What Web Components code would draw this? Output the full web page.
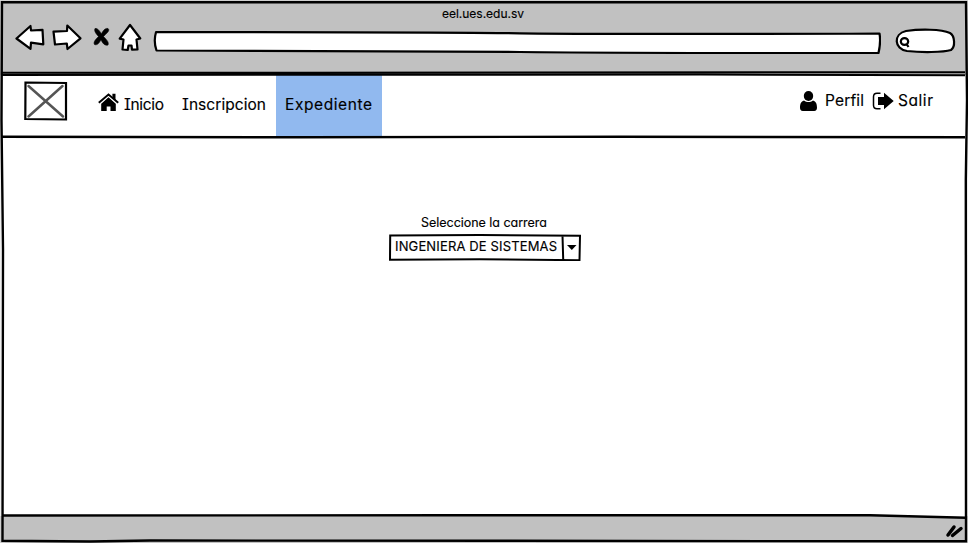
<!DOCTYPE html>
<html lang="es">
<head>
<meta charset="utf-8">
<title>eel.ues.edu.sv</title>
<style>
html,body{margin:0;width:968px;height:543px;overflow:hidden;background:#fff}
body{font-family:Inter,"Open Sans",sans-serif;color:#000}
</style>
</head>
<body>
<sketch-browser>
  <browser-bar slot="bar"><sketch-text size="12" width="82">eel.ues.edu.sv</sketch-text></browser-bar>
  <site-nav slot="nav">
    <image-mark slot="logo"></image-mark>
    <nav-item style="width:84px;--icon-w:21px;--gap:5px" icon="home"><sketch-text size="15.5" width="40" serif>Inicio</sketch-text></nav-item>
    <nav-item style="width:94px"><sketch-text size="15.5" width="84" serif>Inscripcion</sketch-text></nav-item>
    <nav-item style="width:97px;--pad:9px;--bg:#91b9ef"><sketch-text size="15.5" width="87">Expediente</sketch-text></nav-item>
    <nav-item slot="end" style="--icon-w:17px;--gap:8px;width:72px" icon="user"><sketch-text size="15.5" width="39">Perfil</sketch-text></nav-item>
    <nav-item slot="end" style="--icon-w:22px;--gap:4px;width:61px" icon="exit"><sketch-text size="15.5" width="35">Salir</sketch-text></nav-item>
  </site-nav>
  <career-field>
    <sketch-text slot="label" size="12.5" width="126">Seleccione la carrera</sketch-text>
    <sketch-text size="13" width="162">INGENIERA DE SISTEMAS</sketch-text>
  </career-field>
</sketch-browser>
<script>
const define = (name, html, setup) => {
  const t = document.createElement('template');
  t.innerHTML = html;
  customElements.define(name, class extends HTMLElement {
    constructor() { super(); this.attachShadow({mode:'open'}).append(t.content.cloneNode(true)); }
    connectedCallback() { if (setup) setup(this); }
  });
};

// Text whose tracking is adjusted so that it fills the given width.
define('sketch-text', `<style>
:host{display:block;white-space:nowrap;line-height:1.2;flex:none}
span{display:inline-block;font-feature-settings:"cv11","ss03";-webkit-text-stroke:.15px #000}
:host([serif]) span{font-feature-settings:"cv11","cv08"}
</style><span><slot></slot></span>`, el => {
  const s = el.shadowRoot.querySelector('span'), w = +el.getAttribute('width');
  s.style.fontSize = el.getAttribute('size') + 'px';
  el.style.width = w + 'px';
  s.style.letterSpacing = (w - s.getBoundingClientRect().width) / (el.textContent.length - 1) + 'px';
});

const icons = {
  home:`<svg width="21" height="20" viewBox="0 0 21 20"><path d="M3.2 10.800 10.500 4.300l7.300 6.500V18h-5.300v-4.500H8.700V18H3.200z"/><path d="M.8 11 10.500 2.600l9.700 8.400" fill="none" stroke="#fff" stroke-width="1.800"/><path d="M.8 9.700 10.500 1.500l9.700 8.200" fill="none" stroke="#000" stroke-width="2"/><path d="M14.400 .8h3.100v6.500l-3.100-2.500z"/></svg>`,
  user:`<svg width="17" height="20" viewBox="0 0 17 20"><ellipse cx="8.500" cy="5" rx="4.700" ry="5"/><path d="M4 9.400c2.700 2.200 6.300 2.200 9 0 3 .8 4 3.800 4 7.100 0 2-.9 3.500-2.800 3.500H2.800C.9 20 0 18.500 0 16.500 0 13.200 1 10.200 4 9.400z"/></svg>`,
  exit:`<svg width="22" height="20" viewBox="0 0 22 20"><path d="M8.500 2.200H5Q1.500 2.200 1.500 5.700v8.600q0 3.500 3.500 3.500h3.500" fill="none" stroke="#000" stroke-width="1.500"/><path d="M6 6h6V1.700l9.700 8.300-9.700 8.300V14H6z"/></svg>`
};
define('nav-item', `<style>
:host{display:flex;box-sizing:content-box;align-items:center;height:62px;padding-left:var(--pad,0);background:var(--bg,none);gap:var(--gap,0)}
i{display:flex;width:var(--icon-w,0);margin-top:-2px}
:host([icon=home]) i{margin-top:-5px}
::slotted(*){margin-top:-2px}
</style><i></i><slot></slot>`, el => {
  el.shadowRoot.querySelector('i').innerHTML = icons[el.getAttribute('icon')] || '';
});

define('image-mark', `<style>:host{display:block;width:44px;height:40px}svg{display:block}</style>
<svg width="44" height="40" viewBox="0 0 44 40" fill="none"><path d="M1.500 1.500 42 2v36.500L1.300 38z" stroke="#000" stroke-width="2.200"/><path d="M4.500 5 39 35.500M38.500 5 4.500 35.500" stroke="#555" stroke-width="2.500" stroke-linecap="round"/></svg>`);

define('site-nav', `<style>
:host{display:flex;justify-content:space-between;height:61px;padding:0 35px 0 24px;box-sizing:border-box}
.l,.r{display:flex}.l{align-items:center}
.menu{display:flex;margin-left:30px}
slot[name=logo]::slotted(*){margin-bottom:10px}
.r{margin-top:-5px}
.r ::slotted(*){padding-top:1px}
</style><div class="l"><slot name="logo"></slot><div class="menu"><slot></slot></div></div><div class="r"><slot name="end"></slot></div>`);

define('browser-bar', `<style>
:host{display:flex;flex-direction:column;align-items:center;height:75px;background:#c1c1c1}
.title{padding:4px 2px 0 0;height:18px;line-height:0}
.title ::slotted(*){margin-top:-1px}
.tools{display:flex;align-items:center;align-self:stretch;padding:1px 12px 0 15px;height:36px}
svg{display:block;flex:none}
path,ellipse{stroke:#000;stroke-width:2.200;stroke-linejoin:round;fill:#fff}
.arrows{margin-right:9px;margin-top:-4px}.address{margin-right:14px}
</style><div class="title"><slot></slot></div>
<div class="tools">
<svg class="arrows" width="129" height="32" viewBox="15 22 129 32">
<path d="M16.500 37.500 30.500 25l.5 4.500 11.500-.7.8 14.500-12.300-1.600-.5 6.200z"/>
<path d="M53.500 30.700 67 30l.3-5.500L80.500 37.300 67.500 48l-.7-5.500L55 43.500z"/>
<path d="M95 27.500c3-.3 4.500 2.500 6.300 5.200 1.700-2.500 3.500-6 6.700-5.200 2.500 2.200-1.800 5-4.500 8 2.500 2.800 5.800 5.500 4.500 8.500-3.500 1-5.400-2-7-5.200-1.800 3-3.500 5.800-6.500 4.700-1.500-2.500 1.500-5.500 4-8-2.300-2.500-4.700-5.500-3.500-8z" style="fill:#000;stroke-width:.6"/>
<path d="M130 24 140.300 37.500 136.500 38.500 137.500 48.500 132 48.700 131.500 44.500 128.500 44.500 127.700 49 122.500 48.500 123.500 38.500 119.700 37.700z"/>
</svg>
<svg class="address" width="728" height="25" viewBox="153 28 728 25"><path d="M156 31.200Q400 31 520 32.300 650 33.500 879.500 32.500 881 41 878.500 52 650 52.300 520 51 350 49.500 156.500 49.500 153.300 40 156 31.200z"/></svg>
<svg width="61" height="28" viewBox="895 27 61 28"><path d="M906 31C920 29 941 29 950 33 955 36 955.500 47 951 50 943 52.500 921 52.500 907 51 894 49 893 34 906 31z"/><ellipse cx="904.500" cy="41.500" rx="3.700" ry="3.300"/><path d="m906.500 44 2 3"/></svg>
</div>`);

define('career-field', `<style>
:host{display:flex;flex-direction:column;align-items:center}
.select{display:grid;grid-template:26px/174px 18px;align-items:center;margin-top:3px}
.select>*{grid-row:1}
.value{grid-column:1;padding:0 0 4px 6px}
.box{grid-column:1/3;width:192px;height:27px;display:block}
.label{padding-right:2px}
</style><div class="label"><slot name="label"></slot></div>
<div class="select"><svg class="box" viewBox="389 234 192 27"><path d="M390.200 235.500 480 235l100 .7-.5 24.500L480 259.300l-90 .5zM562.500 235.500l.7 24" fill="none" stroke="#000" stroke-width="2"/><path d="M567 245h9.500l-4.700 5z"/></svg><div class="value"><slot></slot></div></div>`);

define('sketch-browser', `<style>
:host{display:grid;grid-template-rows:75px 61px 1fr 27px;width:968px;height:543px;position:relative}
main{padding-top:76px;padding-left:2px}
footer{background:#c1c1c1}
.ink{position:absolute;inset:0;pointer-events:none}
</style><slot name="bar"></slot><slot name="nav"></slot><main><slot></slot></main><footer></footer>
<svg class="ink" width="968" height="543" viewBox="0 0 968 543" fill="none" stroke="#000" stroke-width="2.400">
<path d="M0 0h968M0 0v543M968 0v543" stroke="#ddd" stroke-width="1"/>
<path d="M840 514 967 514v3L840 515z" fill="#fff" stroke="none"/>
<path d="M2 2.200H966L967 100 965.800 180 966 541.300 500 540.800 150 540.500 90 541.500 2.500 540.700 3 250 1.500 120z"/>
<path d="M2 72.700 300 72.700 965 72.200M2 75 300 74.800 700 74.500 965 75.200" stroke-width="2"/>
<path d="M2 136.700 300 137.300 620 136.700 965 137.300"/>
<path d="M2 515.500 450 515.200 870 515.200 966 517.700"/>
<path d="m948 535 6-8M952.500 535.500l8.500-7" stroke-width="3.500" stroke-linecap="round"/>
</svg>`);
</script>
</body>
</html>
